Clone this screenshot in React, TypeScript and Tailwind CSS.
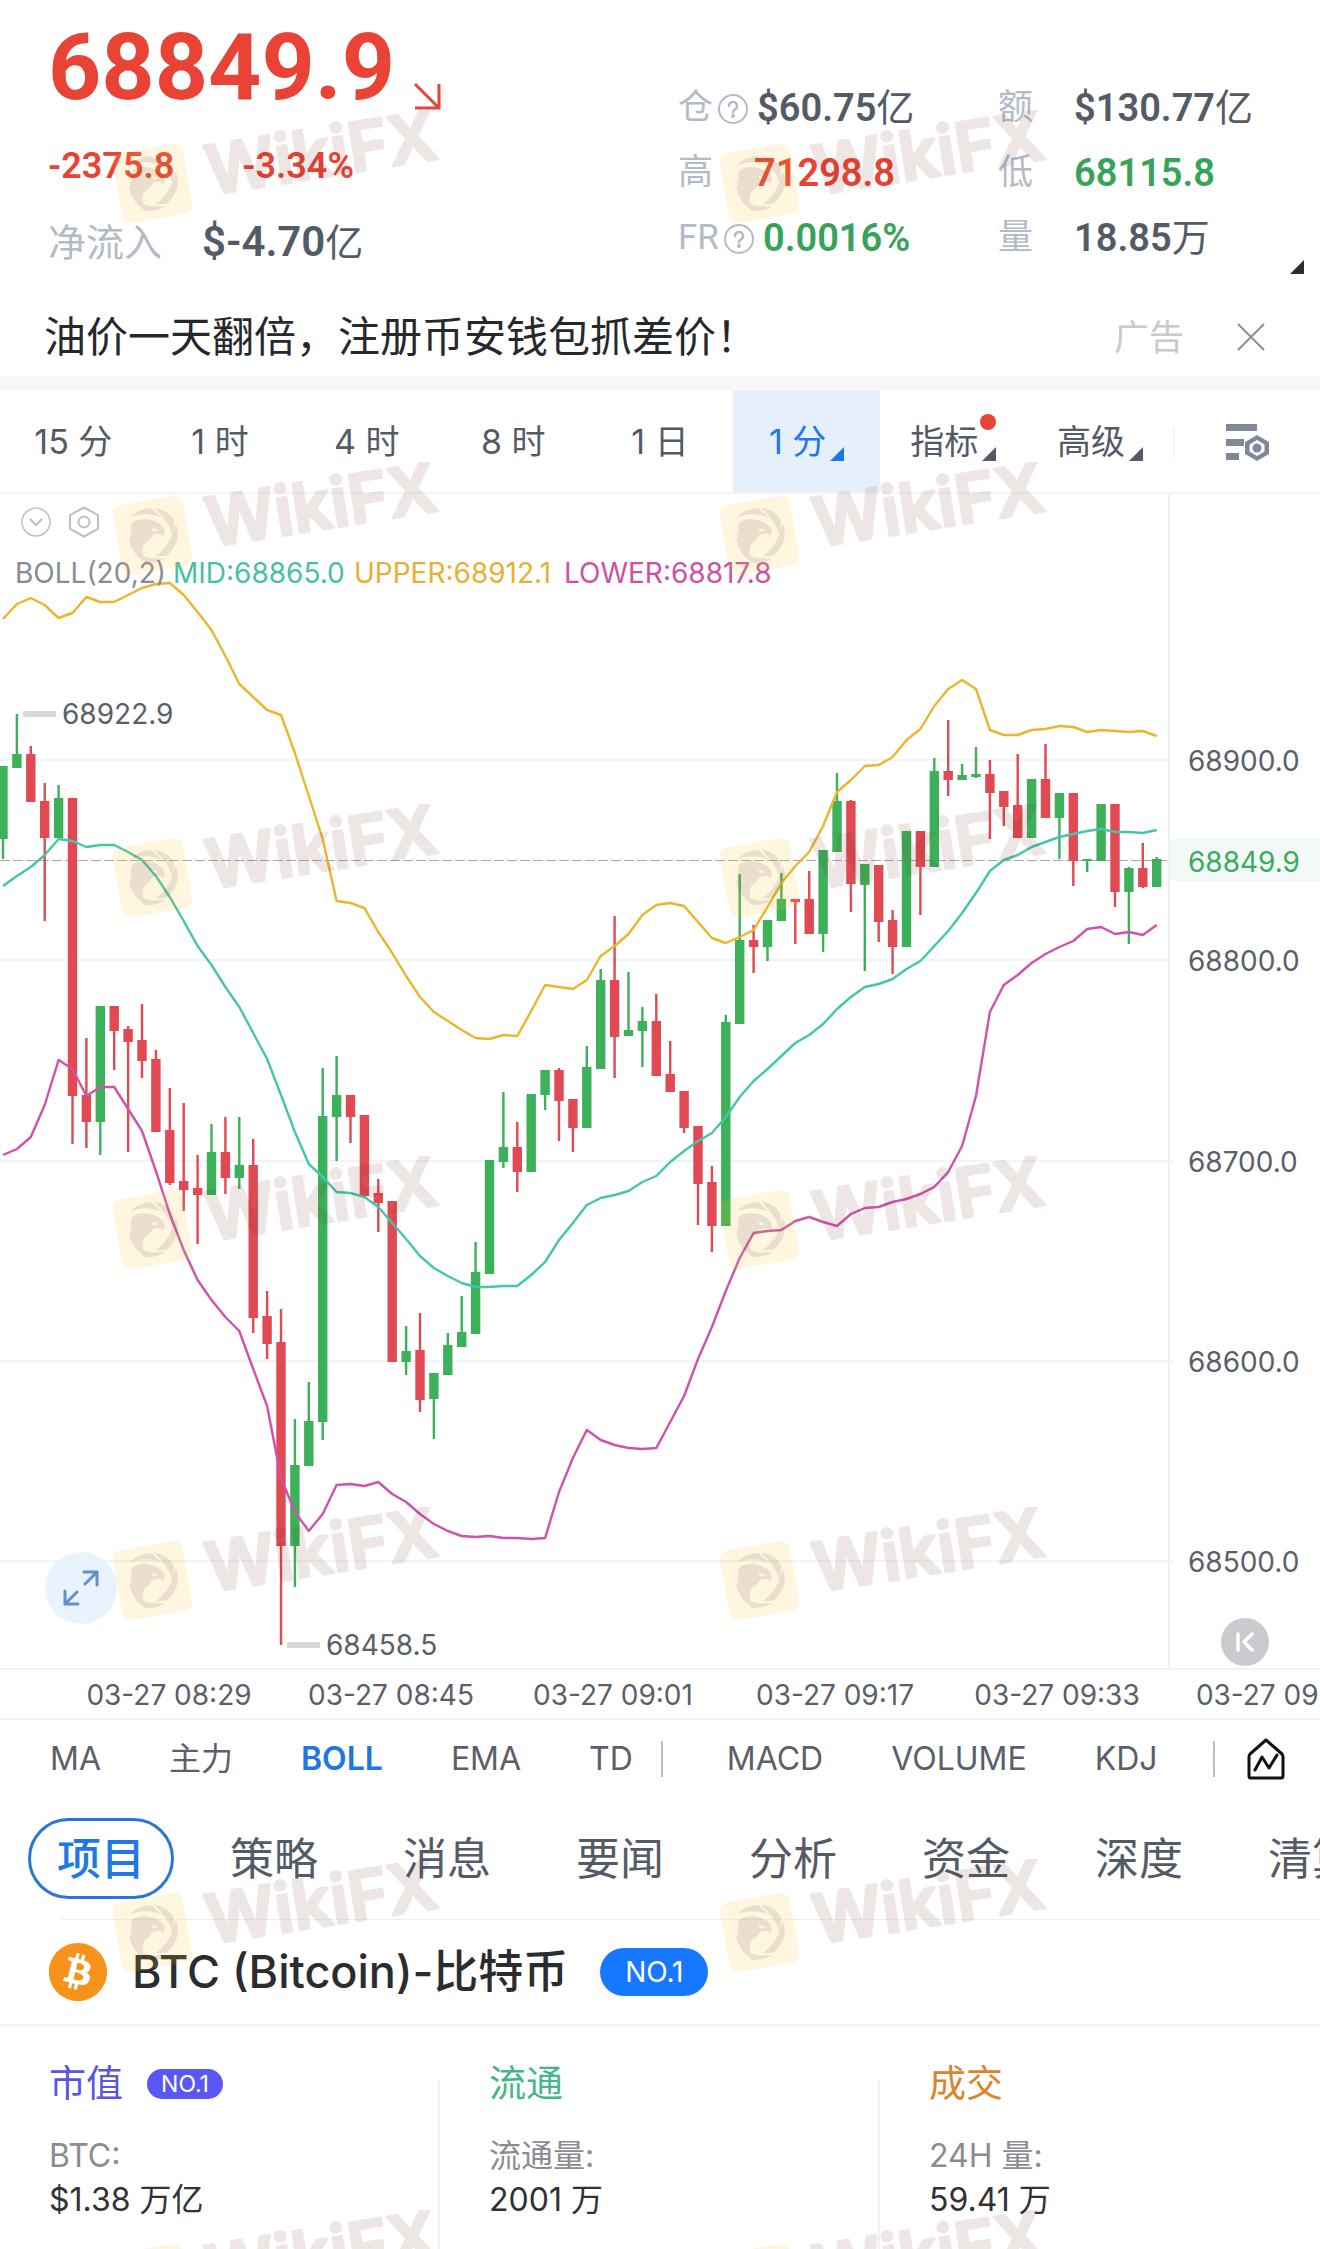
import clsx from "clsx";
import { FaBitcoin } from "react-icons/fa";

type Candle = [up: 0 | 1, high: number, top: number, bottom: number, low: number];

const FIRST_X = 3;
const STEP = 13.9;
const xAt = (i: number) => FIRST_X + i * STEP;

const candles: Candle[] = [
  [1, 766, 766, 839, 859],
  [1, 714, 754, 768, 768],
  [0, 746, 754, 802, 802],
  [0, 783, 801, 838, 921],
  [1, 785, 798, 838, 838],
  [0, 798, 798, 1096, 1144],
  [0, 1038, 1095, 1122, 1148],
  [1, 1006, 1006, 1122, 1155],
  [0, 1006, 1006, 1031, 1070],
  [0, 1026, 1029, 1042, 1152],
  [0, 1004, 1040, 1061, 1078],
  [0, 1050, 1059, 1132, 1132],
  [0, 1088, 1130, 1183, 1185],
  [0, 1103, 1181, 1190, 1211],
  [0, 1155, 1188, 1195, 1244],
  [1, 1124, 1152, 1195, 1195],
  [0, 1117, 1152, 1178, 1194],
  [1, 1117, 1165, 1178, 1189],
  [0, 1139, 1165, 1318, 1333],
  [0, 1291, 1316, 1344, 1359],
  [0, 1309, 1342, 1546, 1645],
  [1, 1419, 1465, 1546, 1587],
  [1, 1382, 1421, 1466, 1466],
  [1, 1068, 1116, 1422, 1440],
  [1, 1056, 1095, 1117, 1161],
  [0, 1095, 1095, 1117, 1143],
  [0, 1115, 1115, 1196, 1196],
  [0, 1179, 1193, 1203, 1232],
  [0, 1201, 1201, 1362, 1362],
  [1, 1326, 1351, 1362, 1375],
  [0, 1313, 1350, 1400, 1412],
  [1, 1373, 1373, 1399, 1439],
  [1, 1333, 1345, 1375, 1375],
  [1, 1296, 1332, 1347, 1347],
  [1, 1242, 1272, 1334, 1334],
  [1, 1160, 1160, 1274, 1274],
  [1, 1092, 1147, 1162, 1168],
  [0, 1122, 1147, 1172, 1192],
  [1, 1094, 1094, 1172, 1172],
  [1, 1070, 1070, 1095, 1110],
  [0, 1068, 1070, 1101, 1141],
  [0, 1099, 1099, 1128, 1152],
  [1, 1046, 1067, 1128, 1128],
  [1, 969, 980, 1069, 1069],
  [0, 916, 980, 1037, 1078],
  [1, 972, 1030, 1036, 1036],
  [1, 1007, 1021, 1031, 1067],
  [0, 994, 1021, 1076, 1076],
  [0, 1041, 1074, 1092, 1092],
  [0, 1091, 1091, 1128, 1133],
  [0, 1126, 1126, 1184, 1225],
  [0, 1166, 1182, 1226, 1252],
  [1, 1015, 1022, 1226, 1226],
  [1, 874, 940, 1024, 1024],
  [0, 925, 940, 947, 973],
  [1, 920, 920, 947, 961],
  [1, 873, 899, 921, 921],
  [0, 899, 899, 902, 944],
  [0, 871, 899, 934, 934],
  [1, 850, 850, 934, 952],
  [1, 773, 801, 852, 852],
  [0, 800, 801, 884, 912],
  [1, 864, 864, 885, 971],
  [0, 865, 865, 922, 942],
  [0, 910, 920, 947, 974],
  [1, 831, 831, 947, 947],
  [0, 831, 831, 867, 915],
  [1, 758, 771, 867, 867],
  [0, 720, 771, 780, 796],
  [1, 764, 775, 780, 780],
  [1, 747, 774, 777, 778],
  [0, 760, 774, 793, 839],
  [0, 791, 791, 807, 826],
  [0, 754, 805, 838, 838],
  [1, 779, 779, 838, 838],
  [0, 744, 779, 818, 818],
  [1, 793, 793, 818, 859],
  [0, 793, 793, 861, 886],
  [1, 859, 859, 861, 872],
  [1, 804, 804, 861, 861],
  [0, 804, 804, 892, 907],
  [1, 867, 868, 892, 944],
  [0, 843, 868, 887, 888],
  [1, 857, 859, 887, 887],
];

const upper = [
  619, 604, 598, 605, 618, 613, 597, 602, 602, 595, 588, 584, 583, 595, 612, 630, 656, 684, 697, 710, 715,
  753, 796, 839, 901, 903, 908, 932, 953, 976, 997, 1012, 1021, 1030, 1038, 1039, 1035, 1036, 1011, 985, 987,
  989, 980, 956, 946, 934, 915, 905, 903, 906, 922, 938, 943, 937, 930, 907, 883, 866, 852, 826, 792, 780, 766,
  765, 757, 740, 729, 706, 689, 680, 689, 730, 735, 735, 730, 729, 726, 727, 732, 730, 731, 732, 731, 736,
];

const mid = [
  886, 876, 867, 855, 839, 841, 847, 845, 845, 852, 860, 876, 897, 921, 946, 965, 987, 1007, 1033, 1059, 1095,
  1132, 1164, 1177, 1192, 1193, 1197, 1207, 1223, 1239, 1256, 1268, 1276, 1283, 1287, 1287, 1286, 1286, 1275,
  1262, 1240, 1223, 1205, 1198, 1195, 1191, 1182, 1176, 1162, 1151, 1141, 1133, 1117, 1097, 1081, 1069, 1056,
  1043, 1035, 1024, 1009, 997, 987, 984, 979, 969, 961, 946, 931, 913, 893, 871, 860, 855, 847, 842, 837, 834,
  831, 829, 832, 832, 833, 830,
];

const lower = [
  1155, 1149, 1137, 1105, 1060, 1069, 1096, 1087, 1087, 1109, 1131, 1171, 1214, 1250, 1280, 1300, 1317, 1331,
  1369, 1406, 1478, 1512, 1531, 1514, 1485, 1484, 1486, 1482, 1494, 1502, 1514, 1524, 1531, 1536, 1537, 1536,
  1538, 1538, 1539, 1538, 1492, 1458, 1430, 1440, 1445, 1448, 1449, 1448, 1422, 1396, 1359, 1327, 1291, 1258,
  1233, 1231, 1230, 1221, 1217, 1222, 1226, 1214, 1208, 1207, 1202, 1199, 1194, 1187, 1172, 1146, 1096, 1012,
  985, 975, 963, 954, 947, 941, 929, 927, 934, 932, 935, 925,
];

const gridLines = [
  { y: 760, label: "68900.0" },
  { y: 960, label: "68800.0" },
  { y: 1161, label: "68700.0" },
  { y: 1361, label: "68600.0" },
  { y: 1561, label: "68500.0" },
];

const toPoints = (ys: number[]) => ys.map((y, i) => `${xAt(i).toFixed(1)},${y}`).join(" ");

const Corner = ({ className }: { className?: string }) => (
  <svg viewBox="0 0 14 14" fill="currentColor" className={clsx("size-3.5", className)} aria-hidden="true">
    <path d="M14 0v14H0z" />
  </svg>
);

const HelpIcon = () => (
  <svg viewBox="0 0 32 32" fill="none" stroke="currentColor" strokeWidth="2" className="size-8" aria-hidden="true">
    <circle cx="16" cy="16" r="14" />
    <path d="M12 13a4 4 0 1 1 6 3.4c-1.500.9-2 1.600-2 3" strokeLinecap="round" strokeWidth="2.400" />
    <circle cx="16" cy="23" r="1" fill="currentColor" />
  </svg>
);

type StatProps = { label: string; help?: boolean; value: string; unit?: string; tone?: string };

const Stat = ({ label, help, value, unit, tone }: StatProps) => (
  <div className="flex h-[65px] items-center">
    <dt className="flex min-w-17 items-center text-[35px] whitespace-nowrap text-[#b4bbc6]">
      {label}
      {help && (
        <button type="button" aria-label={`${label}说明`} className="ml-1">
          <HelpIcon />
        </button>
      )}
    </dt>
    <dd className={clsx("ml-2 text-[38px] font-semibold whitespace-nowrap", tone ?? "text-[#545b66]")}>
      {value}
      {unit && <span className="font-normal">{unit}</span>}
    </dd>
  </div>
);

const Header = () => (
  <header className="relative flex h-[298px] font-[Roboto,'Noto_Sans_CJK_SC',sans-serif]">
    <div className="w-[678px] shrink-0 pt-5.5 pl-12">
      <div className="flex items-end gap-4.5">
        <h1 className="text-[93px] leading-[92px] font-bold text-[#e84335]">68849.9</h1>
        <svg viewBox="0 0 28 28" fill="none" stroke="#e84335" strokeWidth="3" className="mb-1 size-7" aria-hidden="true">
          <path d="M2 2l23 23M26 2v24H2" />
        </svg>
      </div>
      <p className="mt-8 flex gap-17 text-[36px] leading-10 font-semibold text-[#e84335]">
        <span>-2375.8</span>
        <span>-3.34%</span>
      </p>
      <p className="mt-7 flex items-center gap-10 leading-14">
        <span className="text-[38px] text-[#b4bbc6]">净流入</span>
        <span className="text-[42px] font-semibold text-[#545b66]">
          $-4.70<span className="text-[38px] font-normal">亿</span>
        </span>
      </p>
    </div>
    <dl className="grid grow grid-cols-[320px_1fr] content-start pt-[76px]">
      <Stat label="仓" help value="$60.75" unit="亿" />
      <Stat label="额" value="$130.77" unit="亿" />
      <Stat label="高" value="71298.8" tone="text-[#e84335]" />
      <Stat label="低" value="68115.8" tone="text-[#37a35a]" />
      <Stat label="FR" help value="0.0016%" tone="text-[#37a35a]" />
      <Stat label="量" value="18.85" unit="万" />
    </dl>
    <button type="button" aria-label="展开" className="absolute right-4 bottom-6 text-[#2b2d31]">
      <Corner />
    </button>
  </header>
);

const AdBar = () => (
  <div className="flex h-[78px] items-center pr-[54px] pl-11">
    <a href="#ad" className="grow text-[42px] leading-none text-[#26282c]">
      油价一天翻倍，注册币安钱包抓差价！
    </a>
    <span className="mr-13 text-[35px] text-[#c6cad1]">广告</span>
    <button type="button" aria-label="关闭广告">
      <svg viewBox="0 0 30 30" stroke="#8b8d91" strokeWidth="2" className="size-7.5" aria-hidden="true">
        <path d="M2 2l26 26M28 2L2 28" />
      </svg>
    </button>
  </div>
);

const periods = [
  { label: "15 分" },
  { label: "1 时" },
  { label: "4 时" },
  { label: "8 时" },
  { label: "1 日" },
  { label: "1 分", menu: true, active: true },
  { label: "指标", menu: true, dot: true },
  { label: "高级", menu: true },
];

const Periods = () => (
  <nav className="grid h-[103px] grid-cols-9 border-b-2 border-[#f3f5f7]">
    {periods.map(({ label, menu, active, dot }) => (
      <button
        key={label}
        type="button"
        className={clsx(
          "flex items-center justify-center text-[34px] whitespace-nowrap",
          active ? "bg-[#e6f0fd] text-[#1f78ea]" : "text-[#545b66]",
        )}
      >
        <span className="relative flex items-end gap-1">
          {label}
          {menu && <Corner className="mb-1.5" />}
          {dot && <span className="absolute -top-0.5 right-0 size-4 rounded-full bg-[#e84335]" />}
        </span>
      </button>
    ))}
    <div className="flex items-center">
      <span className="h-8 w-0.5 bg-[#f3f5f7]" />
      <button type="button" aria-label="设置" className="mx-auto">
        <svg viewBox="0 0 44 38" className="h-9.5 w-11" fill="#7f8899" aria-hidden="true">
          <path d="M0 1h31v7H0zM0 16h18v7H0zM0 30h13v7H0z" />
          <path
            fillRule="evenodd"
            d="M31 12l12 7v12l-12 7-12-7V19zM31 17l-7.500 4.500v7l7.500 4.500 7.500-4.500v-7z"
          />
          <circle cx="31" cy="25" r="4.500" />
        </svg>
      </button>
    </div>
  </nav>
);

const Chart = () => (
  <section className="relative" aria-label="K线图">
    <svg
      viewBox="0 494 1320 1174"
      className="block h-auto w-full font-[Inter,'Noto_Sans_CJK_SC',sans-serif] text-[28px]"
    >
      {gridLines.map(({ y }) => (
        <path key={y} d={`M0 ${y}H1174`} stroke="#f1f4f8" strokeWidth="2" />
      ))}
      <path d="M1169 494V1668" stroke="#eaf0f6" strokeWidth="2" />
      <rect x="1170" y="839" width="150" height="42" fill="#f2f9f6" />
      <path d="M0 860.500H1168" stroke="#a9a7a9" strokeWidth="1.200" strokeDasharray="10 3" />

      {candles.map(([up, high, top, bottom, low], i) => (
        <g key={i} fill={up ? "#3cb15a" : "#e14953"}>
          <rect x={xAt(i) - 1.2} y={high} width="2.400" height={low - high} />
          <rect x={xAt(i) - 4.7} y={top} width="9.400" height={bottom - top} />
        </g>
      ))}

      <g fill="none" strokeWidth="2.400" strokeLinejoin="round">
        <polyline points={toPoints(upper)} stroke="#ecb52c" />
        <polyline points={toPoints(mid)} stroke="#45c5ab" />
        <polyline points={toPoints(lower)} stroke="#d052ac" />
      </g>

      <path d="M23 714h33M287 1645h33" stroke="#d8d8d8" strokeWidth="6" />
      <g fill="#5a5f69">
        <text x="62" y="724">68922.9</text>
        <text x="326" y="1655">68458.5</text>
        {gridLines.map(({ y, label }) => (
          <text key={y} x="1188" y={y + 11}>
            {label}
          </text>
        ))}
      </g>
      <text x="1188" y="872" fill="#3cab5b">
        68849.9
      </text>

      <text y="583">
        <tspan x="15" fill="#8a8c93">BOLL(20,2)</tspan>
        <tspan x="173" fill="#45bfa6">MID:68865.0</tspan>
        <tspan x="354" fill="#e6b032">UPPER:68912.1</tspan>
        <tspan x="564" fill="#cb51a6">LOWER:68817.8</tspan>
      </text>
    </svg>

    <div className="absolute top-3 left-5 flex gap-4 text-[#b9c0ca]">
      <button type="button" aria-label="收起指标">
        <svg viewBox="0 0 32 32" fill="none" stroke="currentColor" strokeWidth="1.500" className="size-8" aria-hidden="true">
          <circle cx="16" cy="16" r="14" />
          <path d="M10 13l6 6 6-6" strokeWidth="2" />
        </svg>
      </button>
      <button type="button" aria-label="指标设置">
        <svg viewBox="0 0 32 32" fill="none" stroke="currentColor" strokeWidth="2" className="size-8" aria-hidden="true">
          <path d="M16 1.500l14 7.500v14l-14 7.500L2 23V9z" />
          <circle cx="16" cy="16" r="5.500" />
        </svg>
      </button>
    </div>

    <button
      type="button"
      aria-label="全屏"
      className="absolute bottom-11 left-[45px] flex size-18 items-center justify-center rounded-full bg-[#e9f3fe]"
    >
      <svg viewBox="0 0 36 36" fill="none" stroke="#638fca" strokeWidth="3" strokeLinecap="round" className="size-9" aria-hidden="true">
        <path d="M21 2h13v13M33 3L22 14M2 21v13h13M3 33l11-11" />
      </svg>
    </button>
    <button
      type="button"
      aria-label="回到最新"
      className="absolute right-[51px] bottom-0.5 flex size-12 items-center justify-center rounded-full bg-[#cbcbcf]"
    >
      <svg viewBox="0 0 20 20" fill="none" stroke="#fff" strokeWidth="3.500" strokeLinecap="round" strokeLinejoin="round" className="size-5" aria-hidden="true">
        <path d="M3 2v16M17 2l-8 8 8 8" />
      </svg>
    </button>
  </section>
);

const times = ["03-27 08:29", "03-27 08:45", "03-27 09:01", "03-27 09:17", "03-27 09:33", "03-27 09:49"];

const TimeAxis = () => (
  <div className="flex h-[52px] items-center overflow-hidden border-y-2 border-[#eff3f8] pt-0.5 pl-[58px] text-[28px] text-[#5a5f69]">
    {times.map((time) => (
      <span key={time} className="w-[222px] shrink-0 text-center whitespace-nowrap">
        {time}
      </span>
    ))}
  </div>
);

const Indicators = () => (
  <nav className="flex h-[78px] items-center pl-12.5 text-[32px] text-[#5a5f69]">
    <div className="flex gap-17">
      <button type="button">MA</button>
      <button type="button">主力</button>
      <button type="button" className="font-semibold text-[#2177de]">
        BOLL
      </button>
      <button type="button">EMA</button>
      <button type="button">TD</button>
    </div>
    <span className="mr-16 ml-7 h-9 w-0.5 bg-[#b7bdc8]" />
    <div className="flex gap-17">
      <button type="button">MACD</button>
      <button type="button">VOLUME</button>
      <button type="button">KDJ</button>
    </div>
    <span className="mr-8 ml-auto h-9 w-0.5 bg-[#b7bdc8]" />
    <button type="button" aria-label="指标管理" className="mr-[35px]">
      <svg
        viewBox="0 0 38 42"
        fill="none"
        stroke="#111"
        strokeWidth="3"
        strokeLinecap="round"
        strokeLinejoin="round"
        className="h-10.5 w-9.5"
        aria-hidden="true"
      >
        <path d="M19 2l16 14q1 1 1 3v19q0 2-2 2H4q-2 0-2-2V19q0-2 1-3z" />
        <path d="M8 32l7-13 7 11 8-13" />
      </svg>
    </button>
  </nav>
);

const sections = ["项目", "策略", "消息", "要闻", "分析", "资金", "深度", "清算"];

const Tabs = () => (
  <nav className="flex h-[121px] gap-[27px] overflow-hidden pt-5 pl-7 text-[44px]">
    {sections.map((name, i) => (
      <button
        key={name}
        type="button"
        className={clsx(
          "h-[81px] w-[146px] shrink-0 rounded-full leading-none",
          i === 0 ? "border-3 border-[#2a76d6] font-medium text-[#1f78e6]" : "text-[#545b66]",
        )}
      >
        {name}
      </button>
    ))}
  </nav>
);

const Coin = () => (
  <div className="flex h-[106px] items-center border-b-2 border-[#f3f4f5] pl-12">
    <FaBitcoin className="size-15 text-[#f7931a]" />
    <h2 className="ml-6 text-[45px] font-medium text-[#2a2c30]">BTC (Bitcoin)-比特币</h2>
    <span className="ml-8 flex h-12 w-27 items-center justify-center rounded-full bg-[#1677ff] text-[28px] text-white">
      NO.1
    </span>
  </div>
);

const facts = [
  { title: "市值", tone: "text-[#5b55e0]", badge: "NO.1", label: "BTC:", value: "$1.38 万亿" },
  { title: "流通", tone: "text-[#45b58c]", label: "流通量:", value: "2001 万" },
  { title: "成交", tone: "text-[#dc8427]", label: "24H 量:", value: "59.41 万" },
];

const Facts = () => (
  <div className="grid grid-cols-3 pt-7">
    {facts.map(({ title, tone, badge, label, value }, i) => (
      <section key={title} className="flex">
        <div className="grow pb-7 pl-[49px]">
          <h3 className={clsx("flex h-15 items-center text-[37px]", tone)}>
            {title}
            {badge && (
              <span className="ml-6 flex h-7.5 w-19 items-center justify-center rounded-full bg-[#5b57f7] text-[23px] text-white">
                {badge}
              </span>
            )}
          </h3>
          <p className="mt-5 text-[32px] leading-[44px] text-[#8a8c92]">{label}</p>
          <p className="text-[32px] leading-[44px] text-[#303236]">{value}</p>
        </div>
        {i < 2 && <span className="mt-6.5 w-0.5 bg-[#f1f2f4]" />}
      </section>
    ))}
  </div>
);

const Watermark = ({ left, top }: { left: string; top: number }) => (
  <svg viewBox="0 0 360 130" className="absolute h-[130px] w-[360px]" style={{ left, top }} aria-hidden="true">
    <rect x="5" y="38" width="71" height="71" rx="9" fill="#f8c425" opacity="0.150" transform="rotate(-10 40.500 73.500)" />
    <g fill="#55304a" opacity="0.110" transform="translate(40.500 73.500) scale(0.357) translate(-427 -248)">
      <path d="M364 197q27-26 60-25l30 27q-42-20-90-2z" />
      <path d="M432 171q38 4 55 34l-2 44q-16-46-53-78z" />
      <path d="M492 214q20 48-24 90l-34 3q44-28 58-93z" />
      <path d="M462 310q-22 18-56 14-12-4-8-20 24 12 64 6z" />
      <path d="M370 212q20-14 46-9 26 4 42 22 6 12-1 26-4-8-14-8-12 0-18 8-6 12-16 16-14 12-8 34 4 14 18 24-26-6-40-26-14-20-18-42l6 0-4-16 8 2q-8-12-1-31zM424 226l20 6-10 5q-8-1-10-11z" fillRule="evenodd" />
    </g>
    <text
      x="98"
      y="85"
      fontSize="68"
      fontWeight="600"
      fill="#6b2a20"
      stroke="#6b2a20"
      strokeWidth="3"
      strokeLinejoin="round"
      opacity="0.110"
      transform="rotate(-9 98 85)"
      className="font-[Inter,sans-serif]"
    >
      WikiFX
    </text>
  </svg>
);

const watermarkRows = [110, 462, 804, 1156, 1507, 1859, 2210];

export default function App() {
  return (
    <main className="relative overflow-hidden bg-white font-[Inter,'Noto_Sans_CJK_SC',sans-serif]">
      <Header />
      <AdBar />
      <div className="h-[15px] bg-[#f6f7f9]" />
      <Periods />
      <Chart />
      <TimeAxis />
      <Indicators />
      <Tabs />
      <div className="ml-15 h-px bg-[#f0f0f0]" />
      <Coin />
      <Facts />
      <div className="pointer-events-none absolute inset-0 overflow-hidden">
        {watermarkRows.map((top) => (
          <div key={top}>
            <Watermark left="8.500%" top={top} />
            <Watermark left="54.500%" top={top} />
          </div>
        ))}
      </div>
    </main>
  );
}
